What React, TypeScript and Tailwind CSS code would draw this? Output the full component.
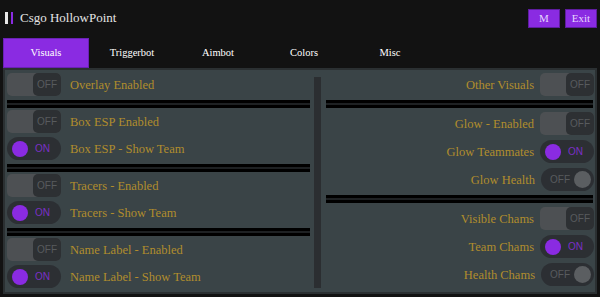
import React from "react";

function SquareOff() {
  return (
    <div className="w-[54px] h-[23px] rounded-[5px] bg-[#4d5053] shrink-0 flex justify-end">
      <div className="w-[28px] h-full rounded-[5px] bg-[#2d3033] flex items-center justify-center text-[10px] text-[#585b5e] font-['Liberation_Sans',sans-serif]">
        OFF
      </div>
    </div>
  );
}

function OnToggle() {
  return (
    <div className="w-[54px] h-[23px] rounded-full bg-[#2c2f33] shrink-0 flex items-center pl-[5px]">
      <div className="w-[16px] h-[16px] rounded-full bg-[#8a2be2]" />
      <span className="ml-[7px] text-[10px] text-[#7b2fc6] font-['Liberation_Sans',sans-serif]">ON</span>
    </div>
  );
}

function RoundOff() {
  return (
    <div className="w-[53px] h-[23px] rounded-full bg-[#2c2f33] shrink-0 flex items-center justify-between pl-[9px] pr-[3px]">
      <span className="text-[10px] text-[#585b5e] font-['Liberation_Sans',sans-serif]">OFF</span>
      <div className="w-[17px] h-[17px] rounded-full bg-[#5b5e61]" />
    </div>
  );
}

type Kind = "sq" | "on" | "round";

function Toggle({ kind }: { kind: Kind }) {
  if (kind === "on") return <OnToggle />;
  if (kind === "round") return <RoundOff />;
  return <SquareOff />;
}

function LeftRow({ label, kind }: { label: string; kind: Kind }) {
  return (
    <div className="flex items-center gap-[9px] h-[23px]">
      <Toggle kind={kind} />
      <span className="text-[12.5px] text-[#b18d2d] whitespace-nowrap pt-[2px]">{label}</span>
    </div>
  );
}

function RightRow({ label, kind }: { label: string; kind: Kind }) {
  return (
    <div className="flex items-center justify-end gap-[6px] h-[23px]">
      <span className="text-[12.5px] text-[#b18d2d] whitespace-nowrap pt-[2px]">{label}</span>
      <Toggle kind={kind} />
    </div>
  );
}

function Sep({ className = "" }: { className?: string }) {
  return <div className={"h-[8px] border-y-[3px] border-black bg-[#1e2123] " + className} />;
}

export default function App() {
  const tabs = ["Visuals", "Triggerbot", "Aimbot", "Colors", "Misc"];
  return (
    <div className="w-[600px] h-[297px] bg-[#121212] overflow-hidden font-['Liberation_Serif',serif] flex flex-col">
      <div className="h-[38px] pb-[2px] flex items-center justify-between pr-[3px]">
        <div className="flex items-center pl-[5px]">
          <div className="w-[3px] h-[12px] bg-[#e8e8e8]" />
          <div className="w-[2px] h-[12px] bg-[#8a2be2] ml-[3px]" />
          <span className="ml-[7px] text-[13px] text-[#e4e4e4]">Csgo HollowPoint</span>
        </div>
        <div className="flex items-center gap-[5px]">
          <button className="w-[32px] h-[19px] bg-[#8a2be2] border border-[#5e1d9e] text-[11px] text-[#e6d5ff] flex items-center justify-center">
            M
          </button>
          <button className="w-[32px] h-[19px] bg-[#8a2be2] border border-[#5e1d9e] text-[11px] text-[#e6d5ff] flex items-center justify-center">
            Exit
          </button>
        </div>
      </div>
      <div className="h-[30px] flex pl-[3px]">
        {tabs.map((t, i) => (
          <div
            key={t}
            className={
              "w-[86px] h-[30px] flex items-center justify-center text-[10.5px] text-white " +
              (i === 0 ? "bg-[#8a2be2] border border-[#6a22b5]" : "")
            }
          >
            {t}
          </div>
        ))}
      </div>
      <div className="mx-[3px] h-[226px] border-2 border-[#2b3032] bg-[#3a4447] flex pl-[2px]">
        <div className="w-[304px] pt-[3px] flex flex-col">
          <LeftRow label="Overlay Enabled" kind="sq" />
          <Sep className="mt-[4px] mb-[2px] mr-[1px]" />
          <div className="flex flex-col gap-[4px]">
            <LeftRow label="Box ESP Enabled" kind="sq" />
            <LeftRow label="Box ESP - Show Team" kind="on" />
          </div>
          <Sep className="mt-[4px] mb-[2px] mr-[1px]" />
          <div className="flex flex-col gap-[4px]">
            <LeftRow label="Tracers - Enabled" kind="sq" />
            <LeftRow label="Tracers - Show Team" kind="on" />
          </div>
          <Sep className="mt-[4px] mb-[2px] mr-[1px]" />
          <div className="flex flex-col gap-[4px]">
            <LeftRow label="Name Label - Enabled" kind="sq" />
            <LeftRow label="Name Label - Show Team" kind="on" />
          </div>
        </div>
        <div className="ml-[3px] w-[7px] mt-[7px] h-[211px] bg-[#2b2e31]" />
        <div className="ml-[5px] w-[268px] pt-[3px] flex flex-col">
          <RightRow label="Other Visuals" kind="sq" />
          <Sep className="my-[4px] mr-[1px]" />
          <div className="flex flex-col gap-[5px]">
            <RightRow label="Glow - Enabled" kind="sq" />
            <RightRow label="Glow Teammates" kind="on" />
            <RightRow label="Glow Health" kind="round" />
          </div>
          <Sep className="my-[4px] mr-[1px]" />
          <div className="flex flex-col gap-[5px]">
            <RightRow label="Visible Chams" kind="sq" />
            <RightRow label="Team Chams" kind="on" />
            <RightRow label="Health Chams" kind="round" />
          </div>
        </div>
      </div>
    </div>
  );
}
